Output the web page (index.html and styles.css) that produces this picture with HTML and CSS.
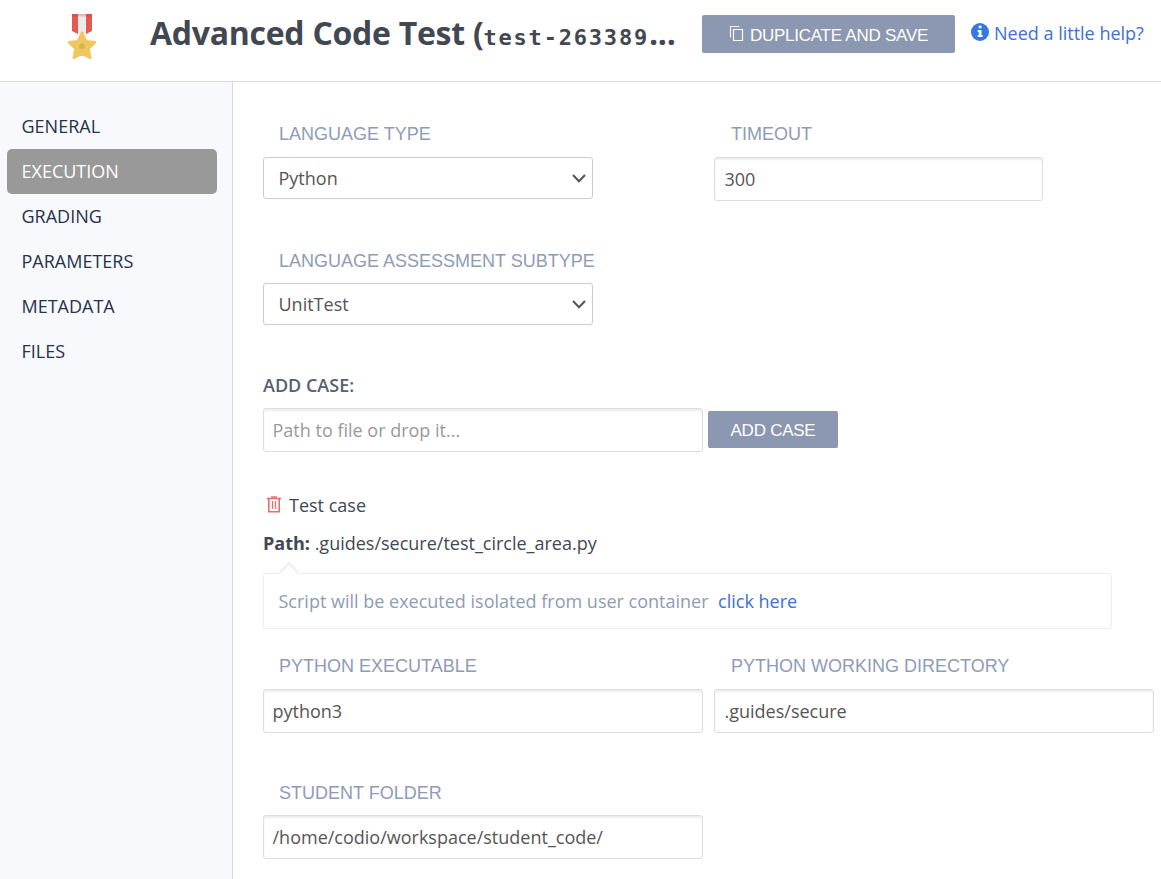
FILE: index.html
```html
<!DOCTYPE html>
<html lang="en">
<head>
<meta charset="utf-8">
<title>Advanced Code Test</title>
<link rel="stylesheet" href="styles.css">
</head>
<body>
<header class="header">
  <svg class="medal" width="30" height="48" viewBox="0 0 30 48">
    <path d="M5 1h20v17l-6 3h-8l-6-3z" fill="#ebebeb"/>
    <path d="M5 1h6v20l-6-3zM19 1h6v17l-6 3z" fill="#e65a4d"/>
    <path d="M5 1h20v2.500H5z" fill="#b9372d" opacity=".25"/>
    <path d="M15 19.500l4.200 8.600 8.800 1.200-6.400 6.400 1.700 9.300-8.300-4.300-8.300 4.300 1.700-9.300L2 29.300l8.800-1.200z" fill="#efc75e" stroke="#efc75e" stroke-width="2.400" stroke-linejoin="round"/>
    <circle cx="15" cy="33.300" r="2.900" fill="#d7b354"/>
  </svg>
  <h1 class="title">Advanced Code Test (<code class="title-id">test-263389</code>...</h1>
  <button class="btn btn-save"><svg class="copy" width="16" height="18" viewBox="0 0 16 18" fill="none" stroke="#fff" stroke-width="1.200"><path d="M1.500 12.500V1.500h9" opacity=".85"/><path d="M4.500 4.500h9v11h-9z"/></svg><span class="save-text">DUPLICATE AND SAVE</span></button>
  <a class="help"><svg class="info" width="18" height="18" viewBox="0 0 18 18"><circle cx="9" cy="9" r="9" fill="#3577e5"/><path d="M7.700 2.800h2.800v2.500H7.700zM6.700 7h3.800v5.200h1.100v1.900H6.700v-1.900h1.100V8.900H6.700z" fill="#fff"/></svg><span class="help-text">Need a little help?</span></a>
</header>
<div class="body">
  <nav class="nav">
    <a class="nav-item">GENERAL</a>
    <a class="nav-item active">EXECUTION</a>
    <a class="nav-item">GRADING</a>
    <a class="nav-item">PARAMETERS</a>
    <a class="nav-item">METADATA</a>
    <a class="nav-item">FILES</a>
  </nav>
  <main class="main">
    <div class="row row-type">
      <div class="field"><label class="label">LANGUAGE TYPE</label>
        <div class="select"><span>Python</span><svg width="14" height="9" viewBox="0 0 14 9" fill="none" stroke="#555" stroke-width="2"><path d="M1 1l6 6.200L13 1"/></svg></div></div>
      <div class="field"><label class="label">TIMEOUT</label><input class="input short" value="300"></div>
    </div>
    <div class="row row-subtype">
      <div class="field"><label class="label">LANGUAGE ASSESSMENT SUBTYPE</label>
        <div class="select"><span>UnitTest</span><svg width="14" height="9" viewBox="0 0 14 9" fill="none" stroke="#555" stroke-width="2"><path d="M1 1l6 6.200L13 1"/></svg></div></div>
    </div>
    <h2 class="add-title">ADD CASE:</h2>
    <div class="add-row"><input class="input" placeholder="Path to file or drop it..."><button class="btn btn-add">ADD CASE</button></div>
    <div class="case"><svg class="trash" width="16" height="18" viewBox="0 0 16 18" fill="none" stroke="#ec6c6c"><path d="M1 2.500h14" stroke-width="1.600"/><path d="M5 1h6" stroke-width="1.500"/><path d="M2.800 3v12.700h10.400V3" stroke-width="1.600"/><path d="M6.500 5v8M9.500 5v8" stroke-width="1.300"/></svg><span>Test case</span></div>
    <div class="path"><b>Path:</b> .guides/secure/test_circle_area.py</div>
    <div class="notice"><svg class="notice-tip" width="20" height="12" viewBox="0 0 20 12"><path d="M1 10.500L10 1.500l9 9V12H1z" fill="#fff"/><path d="M1 10.500L10 1.500l9 9" fill="none" stroke="#eee" stroke-width="2"/></svg><span class="notice-text">Script will be executed isolated from user container</span><a class="link">click here</a></div>
    <div class="row row-python">
      <div class="field"><label class="label">PYTHON EXECUTABLE</label><input class="input" value="python3"></div>
      <div class="field"><label class="label">PYTHON WORKING DIRECTORY</label><input class="input" value=".guides/secure"></div>
    </div>
    <div class="row">
      <div class="field"><label class="label">STUDENT FOLDER</label><input class="input" value="/home/codio/workspace/student_code/"></div>
    </div>
  </main>
</div>
</body>
</html>
```
FILE: styles.css
```css
* { box-sizing: border-box; }
body {
  margin: 0;
  height: 879px;
  overflow: hidden;
  background: #fff;
  color: #414852;
  font: 18px/24px "Open Sans", "Noto Sans", sans-serif;
}
.header {
  display: flex;
  align-items: flex-start;
  height: 82px;
  border-bottom: 1px solid #dcdcdc;
}
.medal { margin: 13px 0 0 67px; }
.title {
  width: 552px;
  margin: 11px 0 0 53px;
  font-size: 32px;
  line-height: 44px;
  font-weight: 700;
  letter-spacing: -.27px;
  color: #414852;
  white-space: nowrap;
}
.title-id {
  font: 700 22px/30px "DejaVu Sans Mono", monospace;
  letter-spacing: 1.8px;
}
.btn {
  padding: 0;
  border: 0;
  border-radius: 2px;
  background: #8c97b2;
  color: #fff;
  font: 17px/20px "Liberation Sans", Arial, sans-serif;
  letter-spacing: -.25px;
}
.btn-save {
  display: flex;
  align-items: center;
  justify-content: center;
  gap: 5px;
  width: 253px;
  height: 38px;
  margin-top: 15px;
}
.save-text { white-space: nowrap; padding-top: 3px; }
.help {
  display: flex;
  gap: 5px;
  margin: 21px 0 0 16px;
  color: #3a70e0;
  white-space: nowrap;
}
.info { margin-top: 2px; }
.body { display: flex; height: 797px; }
.nav {
  width: 233px;
  padding: 22px 15px 0 7px;
  border-right: 1px solid #d8d8d8;
  background: #f8f9fd;
}
.nav-item {
  display: block;
  height: 45px;
  padding-left: 14.5px;
  border-radius: 5px;
  line-height: 45px;
  color: #25324a;
}
.nav-item.active { background: #999; color: #fff; }
.main { flex: 1; padding: 41px 0 0 30px; }
.row { display: grid; grid-template-columns: 440px 440px; column-gap: 11px; }
.row-type { height: 127px; }
.row-subtype { height: 126px; }
.row-subtype .label { height: 33px; }
.label {
  display: block;
  height: 34px;
  padding-left: 16px;
  font: 18px/22px "Liberation Sans", Arial, sans-serif;
  color: #8e9bb8;
  white-space: nowrap;
}
.field + .field .label { padding-left: 17px; }
.select {
  display: flex;
  justify-content: space-between;
  align-items: center;
  width: 330px;
  height: 42px;
  padding: 0 6px 0 14.5px;
  border: 1px solid #ccc;
  border-radius: 3px;
  color: #555;
}
.input {
  display: block;
  width: 440px;
  height: 44px;
  padding: 0 8.5px;
  border: 1px solid #ddd;
  border-radius: 3px;
  background: #fff;
  box-shadow: inset 0 2px 2px rgba(0, 0, 0, .07);
  color: #555;
  font: inherit;
}
.field + .field .input { padding-left: 9.5px; }
.input.short { width: 329px; }
.input::placeholder { color: #999; opacity: 1; }
.add-title {
  height: 32px;
  margin: 0;
  font-size: 18px;
  line-height: 18px;
  font-weight: 600;
  color: #566070;
}
.add-row { display: flex; gap: 5px; }
.btn-add { width: 130px; height: 37px; margin-top: 3px; padding-top: 2px; }
.case { display: flex; gap: 7px; height: 38px; margin-top: 41px; padding-left: 3px; }
.trash { margin-top: 3px; }
.path { height: 42px; }
.notice {
  position: relative;
  display: flex;
  gap: 9.5px;
  align-items: center;
  width: 849px;
  height: 56px;
  padding-left: 14.5px;
  border: 1px solid #eee;
  border-radius: 3px;
  color: #8e9bb8;
}
.notice-tip { position: absolute; left: 15px; top: -12px; }
.link { color: #3a70e0; }
.row-python { height: 127px; margin-top: 26px; }
.row:last-child .label { height: 33px; }
```
